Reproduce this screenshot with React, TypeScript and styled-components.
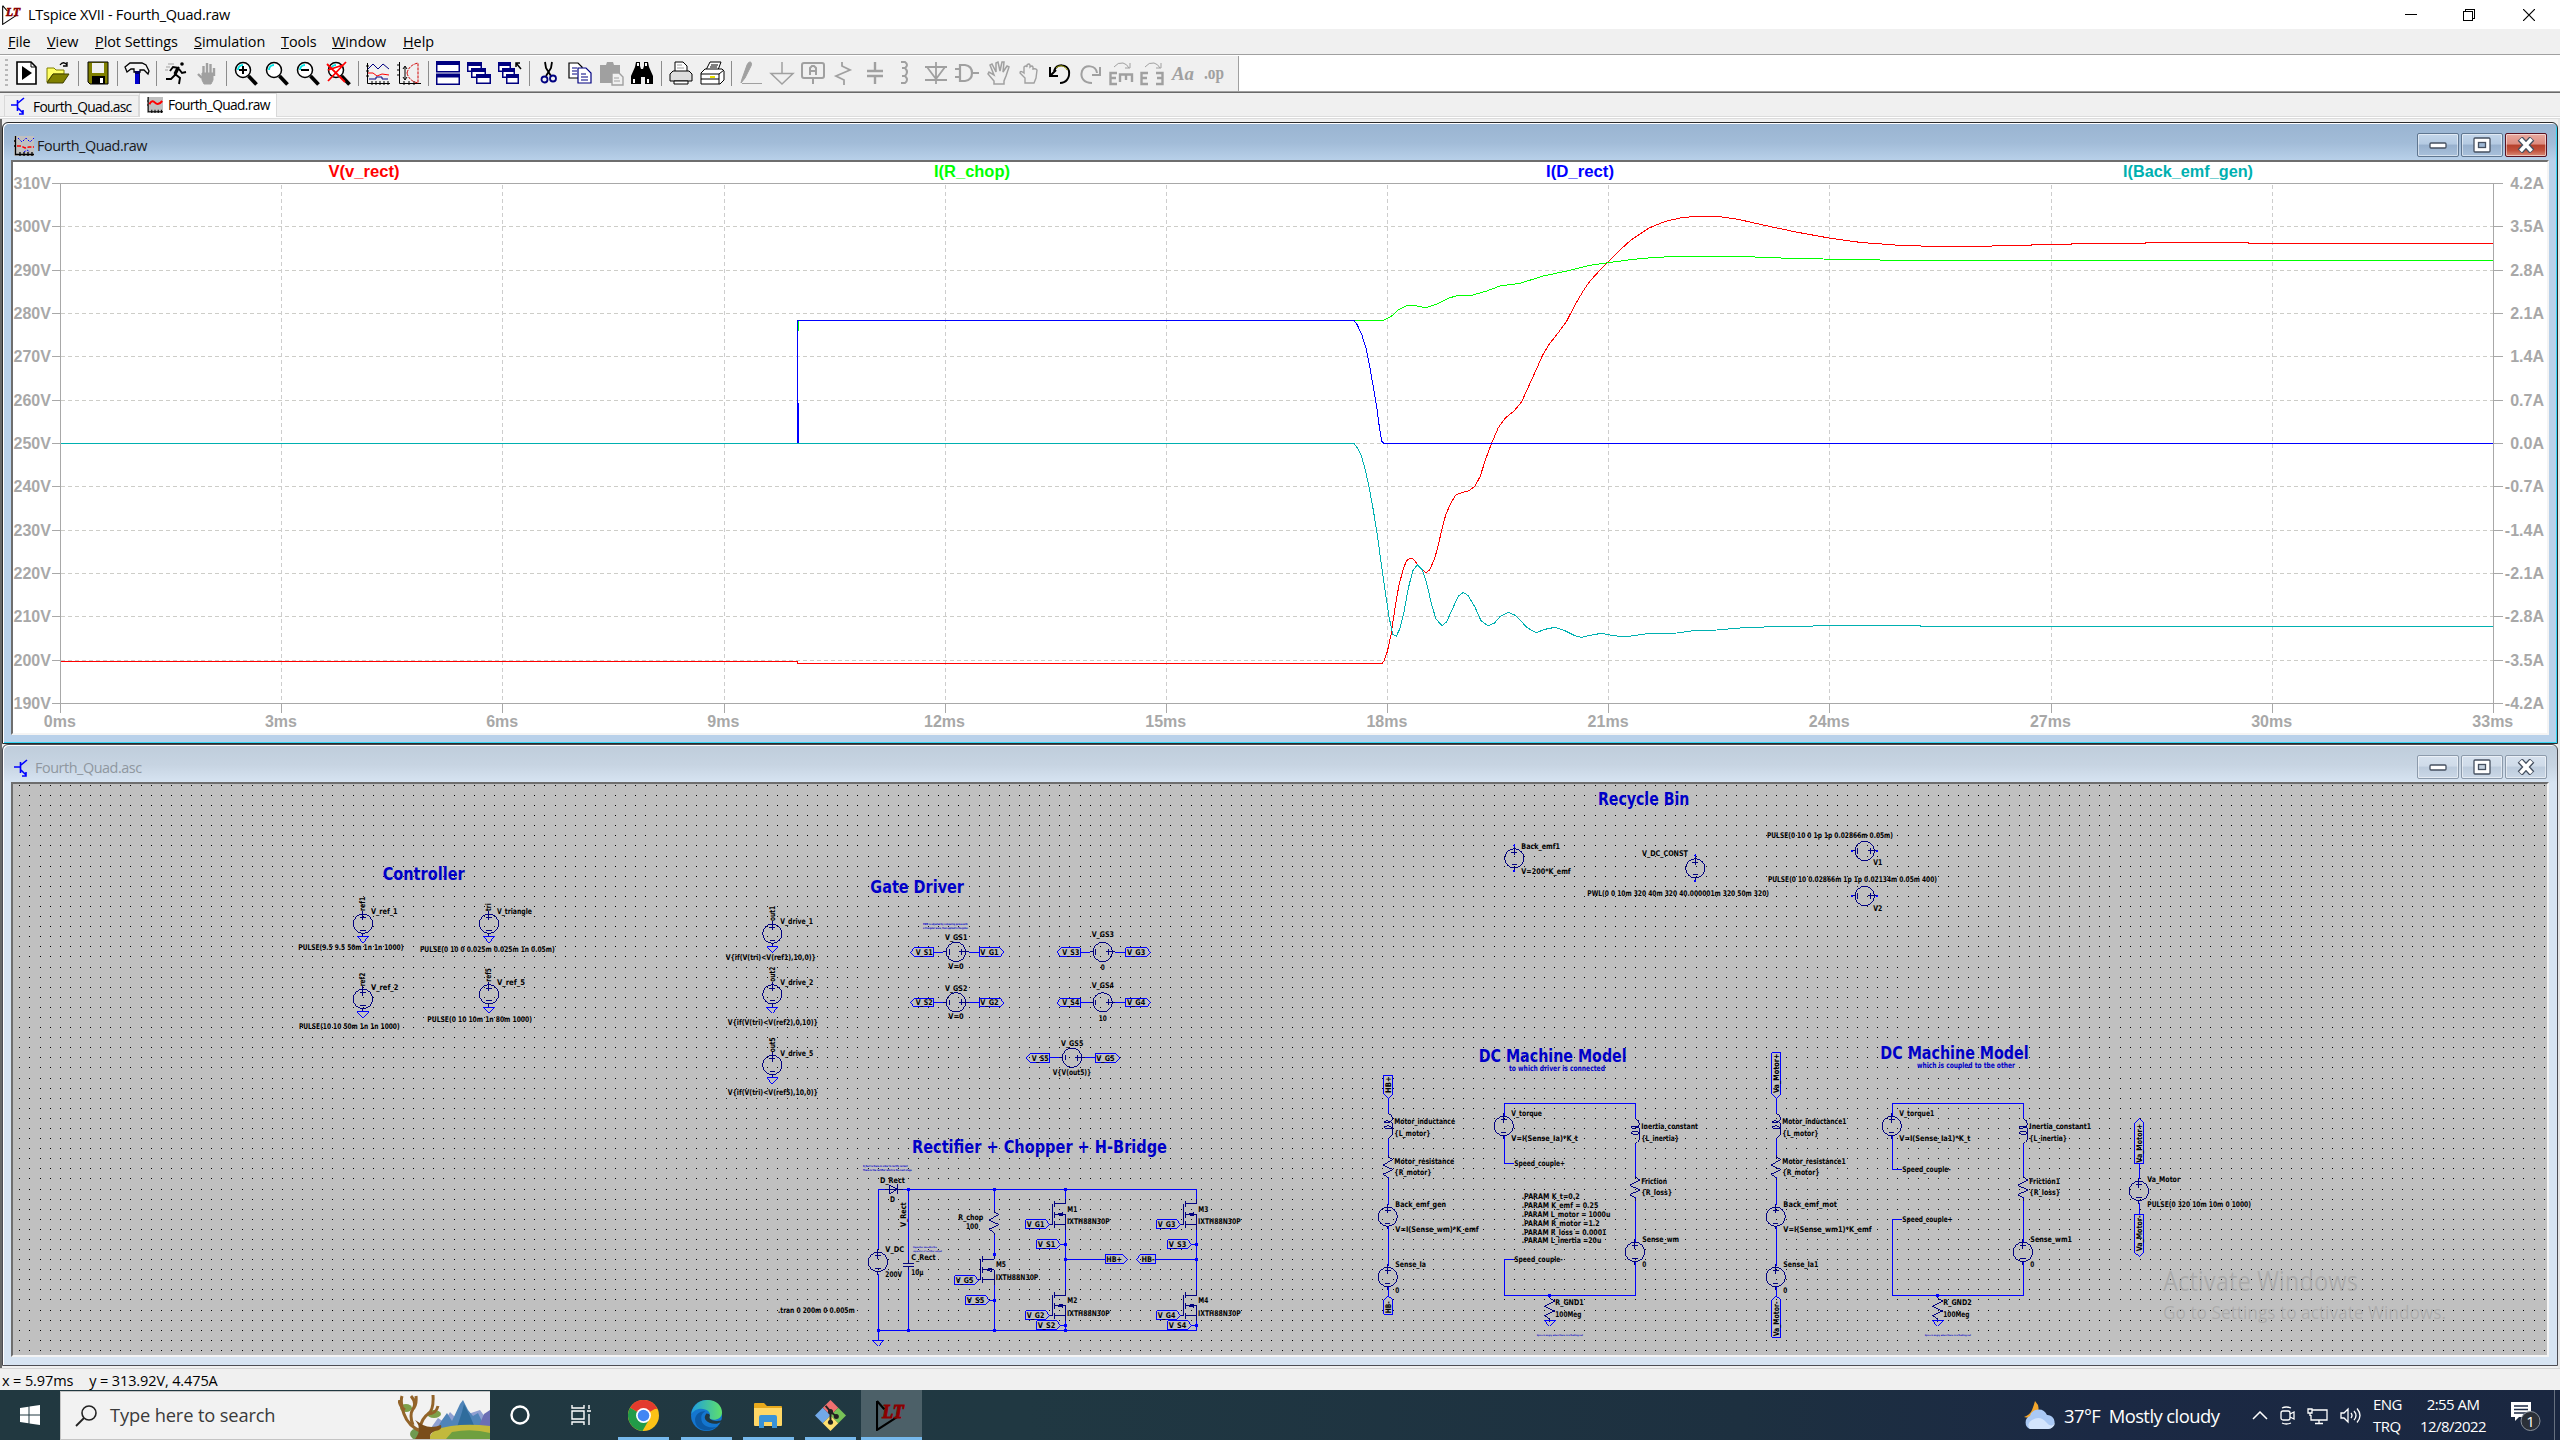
import React from 'react';
import styled, { createGlobalStyle } from 'styled-components';

const UI = '"Open Sans", "Noto Sans", sans-serif';
const SCH = '"DejaVu Sans Condensed", "DejaVu Sans", sans-serif';
const WIRE = '#0000ff';
const SYM = '#000080';

const Global = createGlobalStyle`
  html, body { margin: 0; padding: 0; background: #f0f0f0; }
  body { width: 2560px; height: 1440px; overflow: hidden; font-family: ${UI}; }
  * { box-sizing: border-box; }
  svg { display: block; }
`;

/* ---------- application frame ---------- */
const Screen = styled.div`
  width: 2560px; height: 1440px; display: flex; flex-direction: column;
  background: #f0f0f0; color: #000; overflow: hidden;
`;
const TitleBar = styled.header`
  height: 29px; flex: none; background: #fff; display: flex; align-items: center; padding: 0 1px 0 2px;
`;
const AppTitle = styled.span`
  font-size: 14.5px; letter-spacing: -0.22px; margin-left: 6px; line-height: 29px;
`;
const Spring = styled.div`flex: 1;`;
const CaptionButton = styled.div<{ w: number }>`
  width: ${p => p.w}px; display: flex; justify-content: center;
`;
const MenuBar = styled.nav`
  height: 26px; flex: none; display: flex; background: #f0f0f0; border-bottom: 1px solid #a0a0a0; padding-left: 8px;
`;
const MenuItem = styled.span<{ w: number }>`
  width: ${p => p.w}px; font-size: 14.4px; line-height: 26px; letter-spacing: -0.03px; white-space: nowrap;
`;
const ToolRow = styled.div`
  height: 38px; flex: none; display: flex; background: #fff; padding-top: 1px;
  border-bottom: 1px solid #696969; box-shadow: inset 0 -1px 0 #a0a0a0;
`;
const ToolStrip = styled.div`
  width: 1239px; height: 35px; background: #f0f0f0; border-right: 1px solid #a0a0a0; display: flex; align-items: center;
  padding-bottom: 1px;
`;
const Grip = styled.div`
  width: 3px; height: 28px; margin: 0 4px 0 5px;
  background: repeating-linear-gradient(#b8b8b8 0 2px, transparent 2px 5px);
`;
const ToolButton = styled.div`
  width: 30.84px; flex: none; display: flex; justify-content: center;
  svg { overflow: visible; }
`;
const Separator = styled.div`
  width: 8.5px; height: 25px; flex: none;
  &::after { content: ''; display: block; width: 1px; height: 25px; margin-left: 4px; background: #8c8c8c; }
`;
const TabStrip = styled.div`
  height: 26px; flex: none; display: flex; align-items: flex-start; padding: 0 0 0 4px;
  border-bottom: 1px solid #dcdcdc; background: linear-gradient(#f0f0f0 23px, #dcdcdc 23px 24px, #fff 24px);
`;
const Tab = styled.div<{ active?: boolean }>`
  display: flex; align-items: center; font-size: 13.8px; letter-spacing: -0.68px; white-space: nowrap;
  width: ${p => (p.active ? 138 : 135)}px; height: ${p => (p.active ? 24 : 21)}px;
  margin-top: ${p => (p.active ? 0 : 2)}px; padding: 0 0 ${p => (p.active ? 2 : 0)}px ${p => (p.active ? 7 : 6)}px;
  gap: ${p => (p.active ? 5 : 4)}px;
  background: ${p => (p.active ? '#fff' : '#f0f0f0')}; border: solid #d9d9d9; border-width: 1px 1px 0 1px;
`;

/* ---------- document windows ---------- */
const Desk = styled.main`
  height: 1249px; flex: none; padding: 3px 0 0 0; border: solid #696969; border-width: 0 2px 0 2px;
  border-right-color: #e6e6e6; display: flex; flex-direction: column;
`;
const DocWindow = styled.section<{ active?: boolean }>`
  width: 2556px; height: 622px; flex: none; display: flex; flex-direction: column;
  border: 1px solid ${p => (p.active ? '#2b2b2b' : '#4c4c52')}; border-radius: 6px 6px 0 0;
  padding: 0 8px 8px 8px;
  box-shadow: inset 1px 1px 0 #fff${p => (p.active ? ', inset -1px -1px 0 #33d6f5' : '')};
  background: ${p =>
    p.active
      ? 'linear-gradient(#99b4d1 0, #a2bcd8 20px, #b9d1ea 38px, #b9d1ea 100%)'
      : 'linear-gradient(#bfcddb 0, #c7d4e2 20px, #d7e4f2 38px, #d7e4f2 100%)'};
`;
const DocTitle = styled.div<{ active?: boolean }>`
  height: 37px; flex: none; display: flex; align-items: center; padding: 9px 0 0 3px; font-size: 14.4px;
  letter-spacing: -0.45px; color: ${p => (p.active ? '#1a1a1a' : '#8f979f')};
`;
const DocName = styled.span`margin-left: 3px; line-height: 20px;`;
const DocButtons = styled.div`display: flex; gap: 2px; margin: -2px 2px 0 0;`;
const DocButton = styled.div<{ kind: 'active' | 'idle' | 'close' }>`
  width: 42px; height: 24px; border-radius: 2px; display: flex; align-items: center; justify-content: center;
  border: 1px solid ${p => (p.kind === 'close' ? '#5a1020' : p.kind === 'active' ? '#5f7690' : '#8c9aab')};
  box-shadow: inset 0 0 0 1px rgba(255,255,255,0.5);
  background: ${p =>
    p.kind === 'close'
      ? 'linear-gradient(#e9a99f 0, #dc8c80 46%, #b5402c 50%, #c2513c 75%, #d98b78 100%)'
      : p.kind === 'active'
      ? 'linear-gradient(#c3d6ea 0, #b4cae2 46%, #97b0cd 50%, #a9c1db 100%)'
      : 'linear-gradient(#d6e1ee 0, #cfdbe9 46%, #bccbdc 50%, #cbd8e7 100%)'};
`;
const Client = styled.div<{ bg: string }>`
  width: 2538px; height: 575px; flex: none; background: ${p => p.bg}; overflow: hidden;
  border: 2px solid #6e6e6e; border-right-color: #f4f4f4; border-bottom-color: #f4f4f4;
`;
const StatusBar = styled.footer`
  height: 22px; flex: none; background: #f0f0f0; border-top: 1px solid #d5d5d5; font-size: 14.5px; letter-spacing: -0.12px;
  line-height: 23px; padding-left: 2px; display: flex; gap: 16px; white-space: nowrap;
`;

/* ---------- taskbar ---------- */
const TaskBar = styled.div`
  height: 50px; flex: none; display: flex; color: #fff;
  background: linear-gradient(90deg, #213840 0, #203842 40%, #1d3040 68%, #1b2944 82%, #1a2740 100%);
`;
const StartButton = styled.div`
  width: 60px; display: flex; align-items: center; justify-content: center;
`;
const SearchBox = styled.div`
  width: 430px; height: 49px; margin-top: 1px; background: #f2f2f2; border: solid #c4c4c4; border-width: 1px 0 1px 1px;
  display: flex; align-items: center; padding-left: 14px; color: #3a3a3a; font-size: 18.3px; letter-spacing: -0.15px;
`;
const SearchText = styled.span`margin-left: 13px; flex: 1; white-space: nowrap; line-height: 44px; height: 46px;`;
const TaskButton = styled.div<{ w: number; bar?: number; on?: boolean }>`
  width: ${p => p.w}px; height: 50px; display: flex; flex-direction: column; align-items: center; justify-content: flex-end;
  background: ${p => (p.on ? '#4c6068' : 'transparent')};
  &::after { content: ''; width: ${p => p.bar || 0}px; height: 3px; background: #76b9ed; }
`;
const TaskIcon = styled.div`height: 47px; display: flex; align-items: center; padding-top: 3px;`;
const Weather = styled.div`display: flex; align-items: center; width: 229px; font-size: 18.4px; letter-spacing: -0.55px; gap: 9px; white-space: pre;`;
const Tray = styled.div`display: flex; align-items: center; gap: 12px; width: 121px; padding-top: 1px;`;
const TwoLine = styled.div<{ w: number; center?: boolean }>`
  width: ${p => p.w}px; font-size: 15px; line-height: 22px; letter-spacing: -0.55px; padding-top: 3px;
  text-align: ${p => (p.center ? 'center' : 'left')}; white-space: nowrap;
`;
const Notice = styled.div`width: 59px; display: flex; align-items: center; padding: 2px 0 0 15px;`;
const PeekEdge = styled.div`width: 6px; border-left: 1px solid #66707f;`;

/* ---------- toolbar icons ---------- */
const G = '#a0a0a0';
const K = '#000';
const N = '#000080';

const lens = (mark: React.ReactNode) => (
  <g fill="none" stroke={K}>
    <circle cx="9" cy="9" r="7.500" fill="#fff" strokeWidth="1.500" />
    <path d="M4 9a5 5 0 0 1 5-5" stroke="#00e5e5" strokeWidth="2" />
    <path d="M14.500 15l8 8.500" strokeWidth="3.800" />
    {mark}
  </g>
);
const winBox = (x: number, y: number, w: number, h: number) => (
  <g key={x + '-' + y}>
    <rect x={x} y={y} width={w} height={h} fill={N} />
    <rect x={x + 1.5} y={y + 4} width={w - 3} height={h - 5.5} fill="#fff" />
  </g>
);
const palm = 'M8 23v-3l-6-7 1-2 5 3L4 4l2-1 4 8L10 2l2-1 2 9 2-9h2l-1 10 4-6 2 1-3 9-2 5v3z';

const ICONS: Record<string, React.ReactNode> = {
  play: <g><path d="M2 1h14l5 5v17H2z" fill="#fff" stroke={K} strokeWidth="1.600" /><path d="M16 1v5h5" fill="none" stroke={K} /><path d="M7 5v14l10-7z" /></g>,
  open: <g><path d="M1 21V7h7l2 2h8v4H7z" fill="#ffff66" stroke="#808000" /><path d="M1 22l6-9h16l-6 9z" fill="#808000" stroke="#404000" /><path d="M14 4c2-3 5-3 7 0m0-3v4h-4" fill="none" stroke={K} strokeWidth="1.300" /></g>,
  save: <g><path d="M2 1h20v22H4l-2-2z" fill="#808000" stroke={K} /><rect x="6" y="2" width="12" height="10" fill="#f0f0f0" /><rect x="6" y="15" width="13" height="8" /><rect x="14" y="17" width="3" height="5" fill="#fff" /></g>,
  hammer: <g><path d="M0 6l5-4h12l4 2 3 6-1 3-4-4h-4v2H9V8H6l-4 3z" fill="#f4f4f4" stroke={K} strokeWidth="1.300" /><path d="M10 11h5v12h-5z" fill="#0000d0" /><path d="M10 10h5v3h-5zM14 11h1v12h-1z" fill="#000060" /></g>,
  run: <g fill="none" stroke={K} strokeWidth="1.900"><circle cx="18" cy="3" r="1.800" fill={K} stroke="none" /><path d="M15 6l-4 7 5 4-1 6M12 13l-5 5H2M15 7l-6-1-3 4M15 8l3 4 4-1" /><path d="M14 7l-3 6" strokeWidth="3.400" /><path d="M4 3h6M2 6h4M1 9h3" stroke={G} strokeWidth="1" /></g>,
  hand: <g fill="none" stroke={G}><path d="M7 12h11v7l-2 4H9l-2-4z" fill={G} /><path d="M8.500 13V5M12 13V2M15.500 13V3M19 15V7M7 17l-4-4" strokeWidth="2.400" /></g>,
  zin: lens(<path d="M5 9h8M9 5v8" strokeWidth="2" />),
  z: lens(null),
  zout: lens(<path d="M5 9h8" strokeWidth="2" />),
  zx: lens(<g stroke="#f00" strokeWidth="1.800"><path d="M0 3l18 18M19 1L1 20M1 9l15-5" /></g>),
  plot: <g fill="none" stroke={K}><path d="M1.500 2V22.500H24M6 20v4M10 20v4M14 20v4M18 20v4M22 20v4M0 5h3M0 10h3M0 15h3" /><path d="M2 8l5-5 5 5 5-5 6 5" stroke={N} /><path d="M2 12h5l4 3 5-2 7 1" stroke="#f00" /><path d="M3 18h7v-2h6v2h6" stroke={N} /></g>,
  auto: <g fill="none" stroke={K}><path d="M2.500 1V22.500H24M7 20v4M12 20v4M17 20v4M0 4h3M0 9h3M0 14h3" /><path d="M8 6v12M6 8l2-3 2 3M6 16l2 3 2-3" /><path d="M10 12q2-8 11-10v20q-9-2-11-10z" stroke="#d00000" strokeDasharray="3 1" /></g>,
  tile: <g>{winBox(0, 0, 24, 11.5)}{winBox(0, 12.5, 24, 11.5)}</g>,
  casc: <g>{winBox(0, 1, 15, 10)}{winBox(4, 7, 15, 10)}{winBox(9, 13, 15, 10)}</g>,
  casc2: <g>{winBox(0, 1, 13, 10)}{winBox(4, 7, 13, 10)}{winBox(8, 13, 13, 10)}<path d="M23 8l-5-6m0 4V2h4" fill="none" stroke={K} strokeWidth="1.500" /></g>,
  cut: <g fill="none" strokeWidth="1.800"><path d="M8 1l1 6 5 8M15 1l-1 6-5 8" stroke={K} /><circle cx="7.500" cy="18.500" r="3" stroke={N} /><circle cx="16" cy="17.500" r="3" stroke={N} /></g>,
  copy: <g fill="#fff" stroke={K} strokeWidth="1.200"><path d="M1 2h9l4 4v11H1z" /><path d="M10 7h8l5 5v10H10z" stroke={N} /><path d="M4 7h5M4 10h5M4 13h5M13 13h5M13 16h7M13 19h7" stroke={N} /></g>,
  paste: <g><path d="M1 4h6l1-3h6l1 3h6v8h-8v10H1z" fill={G} /><path d="M13 12h7l4 4v8H13z" fill="#f0f0f0" stroke={G} strokeWidth="1.400" /><path d="M15 17h5M15 20h6" stroke={G} /></g>,
  find: <g><path d="M6 1h4v4l1 3h2l1-3V1h4l1 5 4 9v8h-8v-7h-4v7H1v-8l4-9z" /><path d="M7 2h2v3H7zM15 2h2v3h-2zM3 18h2v4H3zM17 18h2v4h-2z" fill="#fff" /></g>,
  print: <g stroke={K} fill="#fff"><path d="M6 11V1h8l4 4v6z" /><path d="M1 13l3-3h16l3 3v7H1z" fill="#ddd" /><path d="M5 20h14v3H5z" /><path d="M8 4h5M8 7h7" stroke={G} /></g>,
  psetup: <g stroke={K} fill="#fff"><path d="M6 9l4-8h11l-3 8z" /><path d="M1 12l4-4h17l2 2v9l-4 4H1z" /><path d="M1 13h18l5-4M19 13v10M1 18h18M11 4h7M10 6h7" fill="none" /><path d="M10 16h5" stroke="#e8e000" strokeWidth="2" /></g>,
  pencil: <g fill={G} stroke={G}><path d="M3 18L8 4c2-5 6-3 4 1L6 17l-4 5z" /><path d="M3 22.500h20" /></g>,
  gnd: <path d="M12 1v12M1 12.500h22L12 23z" fill="none" stroke={G} strokeWidth="1.500" />,
  label: <g fill="none" stroke={G} strokeWidth="2"><rect x="1" y="2" width="22" height="15" rx="2" /><path d="M12 17v6M9 14V7l2-2h2l2 2v7M9 10h6" /></g>,
  res: <path d="M10 1v4l8 4-14 6 8 4v5" fill="none" stroke={G} strokeWidth="1.800" />,
  cap: <path d="M12 1v9M12 15v8M4 10h16M4 15h16" fill="none" stroke={G} strokeWidth="2.400" />,
  ind: <path d="M8 1h4q4 3 0 6h-3 3q4 4 0 8h-3 3q4 4 0 7H8" fill="none" stroke={G} strokeWidth="2" />,
  diode: <path d="M12 1v22M1 6h22M3 6l9 12 9-12M1 19h22" fill="none" stroke={G} strokeWidth="1.800" />,
  comp: <path d="M0 8h5M0 16h5M5 4v16h5q7-1 7-8t-7-8zM17 12h7" fill="none" stroke={G} strokeWidth="2.200" />,
  move: <path d={palm} fill="none" stroke={G} strokeWidth="1.500" />,
  drag: <path d="M8 22v-5l-5-5q0-3 4 0V6q2-2 3 0V4q2-2 3 0v2q2-2 3 0v2q3-1 4 1l-1 8-2 5z" fill="none" stroke={G} strokeWidth="1.400" />,
  undo: <g fill="none" strokeWidth="2"><path d="M6 10c3-8 13-7 15 0 1 7-3 12-9 12" stroke={K} /><path d="M8 7c4-4 9-2 11 2" stroke="#a0a000" strokeWidth="1" /><path d="M2 6v9h8M2 15l6-6" stroke={K} /></g>,
  redo: <g fill="none" stroke={G} strokeWidth="2"><path d="M19 12c-1-8-12-9-15-2-2 7 2 12 10 12" /><path d="M22 6v8h-8" /></g>,
  em: <g fill="none" stroke={G}><path d="M8 12H1.500V23H8M1.500 17H7M11 21v-7.500h12v7.500M17 14v5" strokeWidth="2.400" /><path d="M5 6q4-5 9-4 4 1 6 5M21 2v5h-5" /></g>,
  e3: <g fill="none" stroke={G}><path d="M8 12H1.500V23H8M1.500 17H7M16 12h6.500V23H16M22.500 17H17" strokeWidth="2.400" /><path d="M5 6q4-5 9-4 4 1 6 5M21 2v5h-5" /></g>,
  aa: <text x="1" y="19" fontFamily='"Liberation Serif", serif' fontStyle="italic" fontWeight="700" fontSize="19.500" fill={G} textLength="22" lengthAdjust="spacingAndGlyphs">Aa</text>,
  op: <text x="2" y="18" fontFamily='"Liberation Serif", serif' fontWeight="700" fontSize="18.500" fill={G} textLength="20" lengthAdjust="spacingAndGlyphs">.op</text>,
};

const TOOLS = [
  'play', 'open', '|', 'save', '|', 'hammer', '|', 'run', 'hand', '|', 'zin', 'z', 'zout', 'zx', '|', 'plot', 'auto', '|',
  'tile', 'casc', 'casc2', '|', 'cut', 'copy', 'paste', 'find', '|', 'print', 'psetup', '|', 'pencil', 'gnd', 'label', 'res',
  'cap', 'ind', 'diode', 'comp', 'move', 'drag', 'undo', 'redo', 'em', 'e3', 'aa', 'op',
];

const LtLogo = ({ size, dark }: { size: number; dark?: boolean }) => (
  <svg width={size} height={size} viewBox="0 0 30 30">
    <path d="M1 1v28L21 16M1 1l7 8" fill="none" stroke={K} strokeWidth={dark ? 2 : 1.600} />
    <text x="6" y="17" fontFamily='"Liberation Serif", serif' fontStyle="italic" fontWeight="700" fontSize="18" fill="#8b0000" stroke="#8b0000" textLength="21" lengthAdjust="spacingAndGlyphs">LT</text>
  </svg>
);
const AscIcon = () => (
  <svg width="18" height="18" viewBox="0 0 18 18"><path d="M0 8h6M6.500 3v11M7 6l6-5M7 11l5 5M12 13v4h-4" fill="none" stroke="#0000ff" strokeWidth="1.600" /></svg>
);
const RawIcon = ({ doc }: { doc?: boolean }) => (
  <svg width={doc ? 20 : 16} height={doc ? 20 : 16} viewBox="0 0 20 20">
    <rect width="20" height="20" fill="#c0c0c0" />
    <path d="M1.500 0V18.500H20M6 16v4M10 16v4M14 16v4M18 16v4M0 5h2M0 10h2" fill="none" stroke={K} strokeWidth="1.300" />
    {doc ? (
      <g fill="none"><path d="M4 2l4 4 4-4 4 4 4-4M10 16l3-2 3 2" stroke="#00f" strokeDasharray="2 1.500" /><path d="M3 10h4l4 2 4-1h5" stroke="#f00" strokeDasharray="4 1.500" strokeWidth="1.500" /></g>
    ) : (
      <path d="M3 9q3-6 7-2t9-2" fill="none" stroke="#f00" strokeWidth="2.500" />
    )}
  </svg>
);

const DocControls = ({ active }: { active?: boolean }) => {
  const ink = '#465060';
  return (
    <DocButtons>
      <DocButton kind={active ? 'active' : 'idle'}>
        <svg width="18" height="8"><rect x="1" y="2" width="16" height="5" rx="1" fill="#fff" stroke={ink} strokeWidth="1.300" /></svg>
      </DocButton>
      <DocButton kind={active ? 'active' : 'idle'}>
        <svg width="18" height="16"><rect x="1" y="1" width="16" height="14" rx="1" fill="#fff" stroke={ink} strokeWidth="1.300" /><rect x="5.500" y="5.500" width="7" height="5" fill={active ? '#9fb8d4' : '#c5d2e0'} stroke={ink} strokeWidth="1.300" /></svg>
      </DocButton>
      <DocButton kind={active ? 'close' : 'idle'}>
        <svg width="20" height="16" viewBox="0 0 20 16"><path d="M4 1.500l12 13M16 1.500l-12 13" stroke={ink} strokeWidth="6.400" /><path d="M4.500 2l11 12M15.500 2l-11 12" stroke="#fff" strokeWidth="3.800" /></svg>
      </DocButton>
    </DocButtons>
  );
};

/* ---------- waveform plot ---------- */
const PX = 60.5, PY = 183.5, PW = 2433, PH = 520;
const LEFT = [310, 300, 290, 280, 270, 260, 250, 240, 230, 220, 210, 200, 190];
const RIGHT = ['4.2', '3.5', '2.8', '2.1', '1.4', '0.7', '0.0', '-0.7', '-1.4', '-2.1', '-2.8', '-3.5', '-4.2'];

// Transient samples are recorded at three steps per unit, relative to (1280, 240).
const fine = (s: string) =>
  s.trim().split(/\s+/).map(p => {
    const [x, y] = p.split(',').map(Number);
    return `${(1280 + x / 3).toFixed(1)},${(240 + y / 3).toFixed(1)}`;
  }).join(' ');

const RED = `60.5,661.5 797,661.5 797,663.5 1382,663.5 ${fine('312,1262 322,1235 327,1212 334,1180 341,1130 349,1080 357,1035 365,1005 372,980 380,962 390,955 400,957 412,973 427,990 438,998 449,990 464,955 475,915 485,870 497,825 512,790 527,765 545,758 567,752 585,738 600,710 618,655 636,607 655,563 675,535 702,513 725,485 750,430 775,375 788,345 808,312 835,278 860,243 885,195 910,152 930,123 965,85 985,66 1020,30 1053,0')} 1649,228 1665,221.5 1682,217.5 1703,216 1722,217 1739,219.5 1763,225 1796,232 1829,238 1861,242.500 1902,245.500 1940,246.500 1980,246.500 2005,245.500 2031,245.500 2032,244.500 2071,244.500 2072,243.500 2145,243.500 2146,242.500 2248,242.500 2249,243.500 2493,243.500`;
const GREEN = `60.5,443.5 797.5,443.5 797.5,330.5 798.5,330.5 798.5,320.5 ${fine('310,241 335,228 355,210 380,197 405,197 437,203 470,193 510,173 532,167 575,166 620,153 660,138 720,130 790,108 860,93 930,76 985,68 1060,58 1115,53 1170,50 1400,50 1480,53 1560,56')} 1860,259.500 1900,260.500 2493,260.500`;
const BLUE = `60.5,443.5 797.5,443.5 797.5,320.5 ${fine('222,241 232,255 245,283 258,325 270,385 280,440 290,500 298,560 305,603 312,610.500')} 2493,443.5`;
const TEAL = `60.5,443.5 ${fine('222,610.5 235,628 245,650 257,695 268,745 280,810 292,885 305,980 318,1070 327,1130 338,1183 349,1189 360,1165 372,1115 385,1045 398,993 412,975 427,990 440,1030 455,1095 468,1137 486,1157 500,1145 518,1105 535,1069 550,1057 565,1067 585,1102 603,1142 623,1157 643,1150 660,1130 685,1117 708,1127 740,1162 768,1178 795,1168 825,1162 855,1172 885,1187 904,1192 935,1185 965,1180 1000,1187 1035,1190 1060,1187 1100,1181 1190,1179 1240,1172 1310,1170 1390,1163 1480,1160 1560,1159')} 1835,625.500 1920,625.500 1921,626.500 2493,626.500`;

const PLOT_LEGEND: [string, string, number, number][] = [
  ['V(v_rect)', '#ff0000', 364, 71], ['I(R_chop)', '#00ff00', 972, 76], ['I(D_rect)', '#0000ff', 1580, 68], ['I(Back_emf_gen)', '#00b0b0', 2188, 130],
];

const Plot = () => (
  <svg width="2534" height="571" viewBox="13 162 2534 571" fontFamily='"Liberation Sans", Arial, sans-serif' fontWeight="700" fontSize="16">
    <g shapeRendering="crispEdges" fill="none" stroke="#a8a8a8">
      {LEFT.map((_, i) => {
        const y = Math.floor(PY + (PH * i) / 12) + 0.5;
        return (
          <g key={i}>
            {i > 0 && i < 12 && <path d={`M${PX} ${y}H${PX + PW}`} stroke="#cdcdc8" strokeDasharray="4 3" />}
            <path d={`M${PX - 9} ${y}h9M${PX + PW} ${y}h9`} />
          </g>
        );
      })}
      {LEFT.slice(0, 12).map((_, i) => {
        const x = Math.floor(PX + (PW * i) / 11) + 0.5;
        return (
          <g key={i}>
            {i > 0 && i < 11 && <path d={`M${x} ${PY + 1}V${PY + PH}`} stroke="#cdcdcd" strokeDasharray="4 3" />}
            <path d={`M${x} ${PY + PH}v9`} />
          </g>
        );
      })}
      <rect x={PX} y={PY} width={PW} height={PH} />
    </g>
    <g fill="none" shapeRendering="crispEdges">
      <polyline points={RED} stroke="#ff0000" />
      <polyline points={GREEN} stroke="#00ff00" />
      <polyline points={BLUE} stroke="#0000ff" />
      <path d="M797.500 403V443" stroke="#0000ff" strokeWidth="2" />
      <polyline points={TEAL} stroke="#00b0b0" />
    </g>
    {PLOT_LEGEND.map(([t, c, x, w]) => (
      <text key={t} x={x - w / 2} y="177" fill={c} textLength={w} lengthAdjust="spacingAndGlyphs">{t}</text>
    ))}
    <g fill="#a8a8a8">
      {LEFT.map((v, i) => <text key={v} x="13.500" y={PY + (PH * i) / 12 + 5.500}>{v}V</text>)}
      {RIGHT.map((v, i) => <text key={v} x="2544" textAnchor="end" y={PY + (PH * i) / 12 + 5.500}>{v}A</text>)}
      {LEFT.slice(0, 12).map((_, i) => <text key={i} textAnchor="middle" x={PX + (PW * i) / 11 - 0.7} y="727">{i * 3}ms</text>)}
    </g>
  </svg>
);

/* ---------- schematic primitives: sheet regions are drawn at three units per pixel ---------- */
type Pt = { x: number; y: number };
const Region = ({ x, y, children }: Pt & { children: React.ReactNode }) => (
  <g transform={`translate(${x} ${y}) scale(0.33333)`} strokeWidth="3" fill="none">{children}</g>
);
const T = ({ a, b, y, s = 23.5, c = '#000', children }: { a: number; b: number; y: number; s?: number; c?: string; children: string }) => (
  <text x={a} y={y + s * 0.36} fontSize={s} fontWeight="700" fill={c} textLength={b - a} lengthAdjust="spacingAndGlyphs">{children}</text>
);
const V = ({ x, a, b, children }: { x: number; a: number; b: number; children: string }) => (
  <text transform={`translate(${x + 8} ${a}) rotate(-90)`} fontSize="23.500" fontWeight="700" fill="#000" textLength={a - b} lengthAdjust="spacingAndGlyphs">{children}</text>
);
const Head = (p: { a: number; b: number; y: number; children: string }) => <T {...p} s={51} c="#0000c8" />;
const Wire = ({ d }: { d: string }) => <path d={d} stroke={WIRE} />;
const Source = ({ x, y, flat, open }: Pt & { flat?: boolean; open?: boolean }) => (
  <g transform={`translate(${x} ${y}) rotate(${flat ? 90 : 0})`} stroke={SYM}>
    <circle r="29" />
    <path d="M-9 -18H9M0 -27V-10M-8 20H8M0 29V38M0 -38V-29" />
    {open && <path d="M-2 -40h4v4h-4zM-2 36h4v4h-4z" stroke={WIRE} />}
  </g>
);
const Ground = ({ x, y }: Pt) => <path d={`M${x - 17} ${y}h34l-17 18z`} stroke={WIRE} />;
const Resistor = ({ x, y }: Pt) => <path d={`M${x} ${y}v5l14 8-31 16 31 14-31 14 17 10v8`} stroke={SYM} />;
const Inductor = ({ x, y }: Pt) => (
  <path d={`M${x} ${y}q14 6 12 17q-3 12-20 12q-10-3 0-6q18-2 22 12q2 14-18 12q-14-4-6-8q20-6 24 12q0 18-14 24`} stroke={SYM} />
);
const Dot = ({ x, y }: Pt) => <rect x={x - 4} y={y - 4} width="8" height="8" fill={WIRE} stroke="none" />;
const Flag = ({ x, y, len = 70, dir, w, children }: Pt & { len?: number; dir: 0 | 90 | 180 | 270; w?: number; children: string }) => {
  const tw = w ?? len - 19;
  const vertical = dir === 90 || dir === 270;
  const toward = dir === 0 || dir === 90 ? -1 : 1;
  const mid = toward * (13 + (len - 13) / 2);
  return (
    <g>
      <path transform={`translate(${x} ${y}) rotate(${dir})`} d={`M0 0l-12-13H-${len}V13H-12z`} stroke={WIRE} />
      {vertical
        ? <V x={x} a={y + mid + tw / 2} b={y + mid - tw / 2}>{children}</V>
        : <T a={x + mid - tw / 2} b={x + mid + tw / 2} y={y}>{children}</T>}
    </g>
  );
};
const Mosfet = ({ x, y, name }: Pt & { name: string }) => (
  <g>
    <path d={`M${x} ${y - 15}v15h-34M${x - 34} ${y - 9}v18M${x - 40} ${y}v62h-8M${x - 34} ${y + 23}v18M${x - 34} ${y + 52}v19M${x - 34} ${y + 31}h34v46M${x - 34} ${y + 61}h34M${x - 26} ${y + 31}l18-5v10z`} stroke={SYM} />
    <T a={x + 5} b={x + 35} y={y + 16}>{name}</T>
    <T a={x + 4} b={x + 132} y={y + 53}>IXTH88N30P</T>
  </g>
);

const DotGrid = () => {
  let d = '';
  for (let j = 0; j < 57; j++) {
    const y = Math.floor(785.4 + j * 10.09);
    if (y > 1354) break;
    for (let i = 0; i < 252; i++) {
      const x = Math.floor(19.9 + i * 10.097);
      if (x < 2547) d += `M${x} ${y}h1v1h-1z`;
    }
  }
  return <path d={d} fill="#000" shapeRendering="crispEdges" />;
};

type MachineProps = Pt & {
  n: string; back: string; head: [number, number, number]; sub: [number, number, number]; subText: string;
  upper: [number, string]; lower: [number, string]; rail: [string, string]; railLen: [number, number]; gnd: string;
};
const Machine = ({ x, y, n, back, head, sub, subText, upper, lower, rail, railLen, gnd }: MachineProps) => {
  const k = n.length * 10;
  return (
    <Region x={x} y={y}>
      <Head a={head[0]} b={head[1]} y={head[2]}>DC Machine Model</Head>
      <T a={sub[0]} b={sub[1]} y={sub[2]} c="#0000c8">{subText}</T>
      <Wire d="M85 205V250M85 325V376M85 440V525M85 590V708M85 770V798" />
      <Flag x={85} y={205} dir={90} len={railLen[0]}>{rail[0]}</Flag>
      <Inductor x={85} y={250} />
      <Resistor x={85} y={376} />
      <Source x={83} y={560} />
      <Source x={83} y={741} />
      <Flag x={85} y={798} dir={270} len={railLen[1]}>{rail[1]}</Flag>
      <T a={103} b={285 + k} y={275}>{`Motor_inductance${n}`}</T>
      <T a={103} b={212} y={311}>{'{L_motor}'}</T>
      <T a={103} b={283 + k} y={395}>{`Motor_resistance${n}`}</T>
      <T a={103} b={215} y={428}>{'{R_motor}'}</T>
      <T a={106} b={n ? 267 : 258} y={524}>{back}</T>
      <T a={106} b={356 + k * 1.5} y={599}>{`V=I(Sense_wm${n})*K_emf`}</T>
      <T a={106} b={198 + k * 1.3} y={704}>{`Sense_Ia${n}`}</T>
      <T a={106} b={118} y={782}>0</T>
      <Wire d={`M433 260V220H826V266M433 318V${upper[0]}H462M826 340V441M826 500V635M826 695V797H433V${lower[0]}H462`} />
      <Source x={431} y={288} />
      <T a={454} b={546 + k * 1.3} y={251}>{`V_torque${n}`}</T>
      <T a={454} b={654 + k * 1.3} y={326}>{`V=I(Sense_Ia${n})*K_t`}</T>
      <T a={463} b={upper[1] === '+' ? 615 : 608} y={upper[0]}>{`Speed_couple${upper[1]}`}</T>
      <T a={463} b={lower[1] === '+' ? 614 : 608} y={lower[0] + 1}>{`Speed_couple${lower[1]}`}</T>
      <Inductor x={826} y={266} />
      <T a={844} b={1014 + k * 1.5} y={290}>{`Inertia_constant${n}`}</T>
      <T a={844} b={957} y={326}>{'{L_inertia}'}</T>
      <Resistor x={826} y={437} />
      <T a={844} b={921 + k * 1.5} y={455}>{`Friction${n}`}</T>
      <T a={844} b={937} y={488}>{'{R_loss}'}</T>
      <Source x={825} y={666} />
      <T a={847} b={957 + k * 1.5} y={629}>{`Sense_wm${n}`}</T>
      <T a={847} b={859} y={704}>0</T>
      <Dot x={569} y={797} />
      <Resistor x={570} y={800} />
      <Ground x={569} y={871} />
      <T a={586} b={671} y={818}>{gnd}</T>
      <T a={586} b={664} y={854}>100Meg</T>
      <T a={530} b={669} y={916} s={7} c="#0000c8">Spice is angry when there is a floating net</T>
    </Region>
  );
};

const PARAMS: [string, number, number][] = [
  ['.PARAM K_t=0.2', 659, 500], ['.PARAM K_emf = 0.25', 715, 527], ['.PARAM L_motor = 1000u', 751, 554],
  ['.PARAM R_motor =1.2', 719, 581], ['.PARAM R_loss = 0.0001', 739, 608], ['.PARAM L_inertia =20u', 724, 632],
];
// x, y, node label, label top, name, name end
const CONTROL: [number, number, string, number, string, number][] = [
  [249, 221, 'ref1', 140, 'V_ref_1', 353], [627, 221, 'tri', 160, 'V_triangle', 756], [249, 447, 'ref2', 368, 'V_ref_2', 355],
  [627, 433, 'ref5', 354, 'V_ref_5', 735], [1477, 251, 'out1', 168, 'V_drive_1', 1599], [1477, 433, 'out2', 350, 'V_drive_2', 1600],
  [1477, 645, 'out5', 562, 'V_drive_5', 1600],
];
const CONTROL_VALUES: [number, number, number, string][] = [
  [55, 370, 293, 'PULSE(9.5 9.5 50m 1n 1n 1000)'], [420, 824, 298, 'PULSE(0 10 0 0.025m 0.025m 1n 0.05m)'],
  [57, 359, 530, 'PULSE(10 10 50m 1n 1n 1000)'], [442, 756, 509, 'PULSE(0 10 10m 1n 80m 1000)'],
  [1337, 1608, 323, 'V{if(V(tri)<V(ref1),10,0)}'], [1343, 1614, 518, 'V{if(V(tri)<V(ref2),0,10)}'], [1343, 1614, 728, 'V{if(V(tri)<V(ref5),10,0)}'],
];
// x, y, index, name y, value, value half width, value y
const GATES: [number, number, number, number, string, number, number][] = [
  [348, 276, 1, 232, 'V=0', 23, 320], [348, 427, 2, 385, 'V=0', 23, 470], [788, 276, 3, 224, '0', 6, 322], [788, 427, 4, 377, '10', 12, 476],
  [696, 593, 5, 551, 'V{V(out5)}', 58, 638],
];

const Schematic = () => (
  <svg width="2534" height="571" viewBox="13 784 2534 571" fontFamily={SCH} shapeRendering="crispEdges">
    <DotGrid />
    <Region x={280} y={850}>
      <Head a={308} b={554} y={72}>Controller</Head>
      {CONTROL.map(([x, y, node, top, name, end]) => (
        <g key={name}>
          <Source x={x} y={y} />
          <Ground x={x} y={y + 39} />
          <V x={x - 1} a={y - 38} b={top}>{node}</V>
          <T a={x + 24} b={end} y={y - 36}>{name}</T>
        </g>
      ))}
      {CONTROL_VALUES.map(([a, b, y, t]) => <T key={t} a={a} b={b} y={y}>{t}</T>)}
    </Region>
    <Region x={840} y={860}>
      <Head a={91} b={372} y={82}>Gate Driver</Head>
      <T a={249} b={383} y={193} s={8} c="#0000c8">PWM is adjusted by comparing pulses with</T>
      <T a={249} b={383} y={205} s={8} c="#0000c8">a triangular wave, then applied to the gates</T>
      {GATES.map(([x, y, i, ny, val, hw, vy]) => (
        <g key={i}>
          <Wire d={`M${x - 67} ${y + 1}H${x - 38}M${x + 38} ${y + 1}H${x + 70}`} />
          <Source x={x} y={y} flat />
          <Flag x={x - 137} y={y + 1} dir={180}>{`V_S${i}`}</Flag>
          <Flag x={x + 144} y={y + 1} dir={0} len={74}>{`V_G${i}`}</Flag>
          <T a={x - 33} b={x + 34} y={ny}>{`V_GS${i}`}</T>
          <T a={x - hw} b={x + hw} y={vy}>{val}</T>
        </g>
      ))}
    </Region>
    <Region x={840} y={1120}>
      <Head a={216} b={981} y={82}>Rectifier + Chopper + H-Bridge</Head>
      <T a={69} b={203} y={139} s={8} c="#0000c8">D_Rect is there in order to rectify current</T>
      <T a={69} b={215} y={151} s={8} c="#0000c8">There is the rectifier which is the next stage</T>
      <T a={219} b={290} y={382} s={7} c="#0000c8">Capacitor smooths the</T>
      <T a={219} b={306} y={394} s={7} c="#0000c8">capacitor of rectifier output</T>
      <Wire d="M115 388V208H135M188 208H1070V238M205 208V420M205 450V631M115 463V661M115 631H1070V583M463 208V275M463 340V403M463 490V631M677 208V238M677 322V511M677 590V631M677 418H796M947 418H1070M1070 322V511M463 541H449M662 373H677M662 616H677M1056 373H1070M1056 616H1070" />
      <path d="M135 208H188M148 195V222L172 208ZM173 193V223M189 430H221M189 439H221M205 420V430M205 439V450" stroke={SYM} />
      <Source x={114} y={426} />
      <Ground x={115} y={661} />
      <Resistor x={463} y={271} />
      <Mosfet x={677} y={252} name="M1" />
      <Mosfet x={1070} y={252} name="M3" />
      <Mosfet x={677} y={526} name="M2" />
      <Mosfet x={1070} y={526} name="M4" />
      <Mosfet x={463} y={418} name="M5" />
      <Flag x={629} y={313} dir={0} len={72}>V_G1</Flag>
      <Flag x={1022} y={313} dir={0} len={72}>V_G3</Flag>
      <Flag x={629} y={586} dir={0} len={72}>V_G2</Flag>
      <Flag x={1022} y={586} dir={0} len={72}>V_G4</Flag>
      <Flag x={416} y={481} dir={0} len={72}>V_G5</Flag>
      <Flag x={662} y={373} dir={0} len={72}>V_S1</Flag>
      <Flag x={1055} y={373} dir={0} len={72}>V_S3</Flag>
      <Flag x={662} y={616} dir={0} len={72}>V_S2</Flag>
      <Flag x={1055} y={616} dir={0} len={72}>V_S4</Flag>
      <Flag x={449} y={541} dir={0} len={72}>V_S5</Flag>
      <Flag x={862} y={418} dir={0} len={66}>HB+</Flag>
      <Flag x={889} y={418} dir={180} len={58} w={40}>HB-</Flag>
      {[[205, 208], [463, 208], [677, 208], [463, 403], [677, 373], [1070, 373], [677, 418], [1070, 418], [463, 541], [677, 616], [1070, 616], [115, 631], [205, 631], [463, 631], [677, 631]].map(([x, y]) => (
        <Dot key={`${x}-${y}`} x={x} y={y} />
      ))}
      <T a={120} b={195} y={182}>D_Rect</T>
      <T a={150} b={165} y={237}>D</T>
      <V x={191} a={321} b={247}>V_Rect</V>
      <T a={355} b={430} y={293}>R_chop</T>
      <T a={378} b={415} y={320}>100</T>
      <T a={136} b={192} y={389}>V_DC</T>
      <T a={136} b={186} y={464}>200V</T>
      <T a={214} b={287} y={413}>C_Rect</T>
      <T a={214} b={250} y={458}>10µ</T>
      <T a={-186} b={44} y={571}>.tran 0 200m 0 0.005m</T>
    </Region>
    <Machine x={1360} y={1030} n="" back="Back_emf_gen" head={[356, 800, 78]} sub={[447, 735, 116]} subText="to which driver is connected"
      upper={[401, '+']} lower={[688, '-']} rail={['HB+', 'HB-']} railLen={[69, 55]} gnd="R_GND1" />
    <Region x={1360} y={1030}>
      {PARAMS.map(([t, b, y]) => <T key={t} a={485} b={b} y={y}>{t}</T>)}
    </Region>
    <Machine x={1748} y={1030} n="1" back="Back_emf_mot" head={[397, 842, 70]} sub={[507, 801, 107]} subText="which is coupled to the other"
      upper={[418, '-']} lower={[568, '+']} rail={['Va_Motor+', 'Va_Motor-']} railLen={[137, 124]} gnd="R_GND2" />
    <Region x={1750} y={1030}>
      <Wire d="M1168 401V447M1168 520V553" />
      <Flag x={1168} y={266} dir={270} len={135}>Va_Motor+</Flag>
      <Flag x={1168} y={680} dir={90} len={127}>Va_Motor-</Flag>
      <Source x={1167} y={483} />
      <T a={1192} b={1290} y={449}>Va_Motor</T>
      <T a={1192} b={1503} y={524}>PULSE(0 320 10m 10m 0 1000)</T>
    </Region>
    <Region x={1480} y={780}>
      <Head a={354} b={628} y={58}>Recycle Bin</Head>
      <Source x={103} y={235} open />
      <T a={124} b={240} y={200}>Back_emf1</T>
      <T a={124} b={272} y={275}>V=200*K_emf</T>
      <Source x={646} y={265} open />
      <T a={486} b={624} y={221}>V_DC_CONST</T>
      <T a={322} b={867} y={341}>PWL(0 0 10m 320 40m 320 40.000001m 320 50m 320)</T>
      <Source x={1154} y={213} flat open />
      <T a={861} b={1239} y={167}>PULSE(0 10 0 1p 1p 0.02866m 0.05m)</T>
      <T a={1180} b={1207} y={248}>V1</T>
      <Source x={1154} y={348} flat open />
      <T a={864} b={1371} y={299}>PULSE(0 10 0.02866m 1p 1p 0.02134m 0.05m 400)</T>
      <T a={1180} b={1207} y={386}>V2</T>
    </Region>
    <g fill="#808080" fillOpacity="0.32" fontFamily={UI}>
      <text x="2163" y="1291" fontSize="26.500" textLength="195" lengthAdjust="spacingAndGlyphs">Activate Windows</text>
      <text x="2163" y="1319" fontSize="19" textLength="283" lengthAdjust="spacingAndGlyphs">Go to Settings to activate Windows.</text>
    </g>
  </svg>
);

/* ---------- taskbar drawings ---------- */
const SearchArt = () => (
  <svg width="92" height="47" viewBox="0 0 92 47">
    <path d="M30 40l10-14 6 4 6-10 6 6 24-8 10 14v12z" fill="#8fa0d2" />
    <path d="M38 38l6-10 5-7 5 8 8-17 3-4 5 10 5 6 5-3 8 17z" fill="#4f84b8" />
    <path d="M58 38l6-18 2-8 6 12 6 14z" fill="#2f6c9c" />
    <path d="M80 36l6-14 6-4v20z" fill="#6b6fb4" />
    <path d="M36 38q24-8 56-4v13H30z" fill="#c2b93c" />
    <path d="M54 40q20-4 38 1v6H48z" fill="#6f9f3f" />
    <ellipse cx="8" cy="16" rx="6" ry="4" fill="#7da04a" /><ellipse cx="36" cy="22" rx="7" ry="4" fill="#7da04a" /><ellipse cx="20" cy="42" rx="8" ry="6" fill="#6f9a50" />
    <path d="M24 40Q10 34 6 22T4 4M7 18q-5-3-6-10M15 33q-4-10 0-16t-2-13M14 18q5-4 4-14M22 36q2-10 8-14t5-19M30 22q8 0 10-8" fill="none" stroke="#93642a" strokeWidth="3" />
    <path d="M17 47q8-10 0-19l8 5q8 4 18 0 2 5-6 6-6 2-5 8z" fill="#7a4d1a" />
  </svg>
);
const Chrome = () => (
  <svg width="31" height="31" viewBox="0 0 30 30">
    <circle cx="15" cy="15" r="15" fill="#fbc116" />
    <path d="M15 15L2 7.500A15 15 0 0 1 28 7.500z" fill="#e33b2e" />
    <path d="M15 15L2 7.500A15 15 0 0 0 14 30l7-12z" fill="#229b48" />
    <path d="M15 8H28.300" stroke="#e33b2e" strokeWidth="1" />
    <circle cx="15" cy="15" r="7.200" fill="#fff" /><circle cx="15" cy="15" r="5.600" fill="#4285f4" />
  </svg>
);
const Edge = () => (
  <svg width="31" height="31" viewBox="0 0 30 30">
    <defs><linearGradient id="edgeTop" x1="0" x2="1"><stop offset="0" stopColor="#1e9de0" /><stop offset="1" stopColor="#5fe06a" /></linearGradient></defs>
    <circle cx="15" cy="15" r="15" fill="#1476cf" />
    <path d="M0 14C2 4 9 0 16 0c9 0 14 6 14 12 0 5-4 7-8 7-3 0-5-1-4-3 3-7-12-12-18-2z" fill="url(#edgeTop)" />
    <path d="M18 16c-1 3 4 5 9 4 2 0 4-1 3 0-4 5-13 3-16-1-2-3 1-6 1-6 2 0 4 1 3 3z" fill="#203842" />
    <path d="M10 16c-1 9 7 12 15 10-8 6-22 4-21-8 1-5 6-8 10-7-2 1-4 3-4 5z" fill="#0c59a4" />
  </svg>
);
const Folder = () => (
  <svg width="28" height="25" viewBox="0 0 28 25">
    <path d="M0 1q0-1 1-1h9l3 3h14q1 0 1 1v18H0z" fill="#e8a91c" /><path d="M0 5h28v17q0 1-1 1H1q-1 0-1-1z" fill="#ffd766" />
    <path d="M5 25V14q0-2 2-2h14q2 0 2 2v11h-5v-6h-8v6z" fill="#3a93d8" />
  </svg>
);
const GitIcon = () => (
  <svg width="31" height="31" viewBox="0 0 32 32">
    <path d="M16 0l8 8-8 8-8-8z" fill="#f07070" /><path d="M24 8l8 8-8 8-8-8z" fill="#78c257" /><path d="M8 8l8 8-8 8-8-8z" fill="#72a9e8" /><path d="M16 16l8 8-8 8-8-8z" fill="#ffe070" />
    <path d="M11 6l5 6v12M16 12l6 5" stroke="#222" strokeWidth="2" fill="none" />
    <circle cx="16" cy="12" r="2.600" fill="#222" /><circle cx="22" cy="17" r="2.600" fill="#222" /><circle cx="16" cy="23" r="2.600" fill="#222" />
  </svg>
);

const MENU: [string, number][] = [['File', 39], ['View', 48], ['Plot Settings', 99], ['Simulation', 87], ['Tools', 51], ['Window', 71], ['Help', 50]];

export default function App() {
  return (
    <Screen>
      <Global />
      <TitleBar>
        <LtLogo size={20} />
        <AppTitle>LTspice XVII - Fourth_Quad.raw</AppTitle>
        <Spring />
        <CaptionButton w={58}><svg width="12" height="12"><path d="M0 5.500h12" stroke="#000" /></svg></CaptionButton>
        <CaptionButton w={58}><svg width="12" height="12" fill="none" stroke="#000" shapeRendering="crispEdges"><path d="M.5 2.500h9v9h-9zM2.500 2.500v-2h9v9h-2" /></svg></CaptionButton>
        <CaptionButton w={61}><svg width="12" height="12"><path d="M0 0l12 12M12 0L0 12" stroke="#000" strokeWidth="1.200" /></svg></CaptionButton>
      </TitleBar>
      <MenuBar>
        {MENU.map(([m, w]) => (
          <MenuItem key={m} w={w}><u>{m[0]}</u>{m.slice(1)}</MenuItem>
        ))}
      </MenuBar>
      <ToolRow>
        <ToolStrip>
          <Grip />
          {TOOLS.map((t, i) =>
            t === '|' ? <Separator key={i} /> : (
              <ToolButton key={i}><svg width="24" height="24" viewBox="0 0 24 24">{ICONS[t]}</svg></ToolButton>
            ),
          )}
        </ToolStrip>
      </ToolRow>
      <TabStrip>
        <Tab><AscIcon />Fourth_Quad.asc</Tab>
        <Tab active><RawIcon />Fourth_Quad.raw</Tab>
      </TabStrip>
      <Desk>
        <DocWindow active>
          <DocTitle active><RawIcon doc /><DocName>Fourth_Quad.raw</DocName><Spring /><DocControls active /></DocTitle>
          <Client bg="#ffffff"><Plot /></Client>
        </DocWindow>
        <DocWindow>
          <DocTitle><AscIcon /><DocName>Fourth_Quad.asc</DocName><Spring /><DocControls /></DocTitle>
          <Client bg="#c0c0c0"><Schematic /></Client>
        </DocWindow>
      </Desk>
      <StatusBar><span>x = 5.97ms</span><span>y = 313.92V, 4.475A</span></StatusBar>
      <TaskBar>
        <StartButton><svg width="20" height="20" viewBox="0 0 20 20"><path d="M0 3l8.500-1.200v7.700H0zM9.500 1.600L20 0v9.500H9.500zM0 10.500h8.500v7.700L0 17zM9.500 10.500H20V20L9.500 18.400z" fill="#fff" /></svg></StartButton>
        <SearchBox>
          <svg width="22" height="22" viewBox="0 0 22 22"><circle cx="14" cy="8" r="7" fill="none" stroke="#222" strokeWidth="1.600" /><path d="M9 13l-8 8" stroke="#222" strokeWidth="1.800" /></svg>
          <SearchText>Type here to search</SearchText>
          <SearchArt />
        </SearchBox>
        <TaskButton w={60}><TaskIcon><svg width="20" height="20"><circle cx="10" cy="10" r="8.500" fill="none" stroke="#fff" strokeWidth="2.400" /></svg></TaskIcon></TaskButton>
        <TaskButton w={62}><TaskIcon><svg width="21" height="20" fill="none" stroke="#fff" strokeWidth="1.400"><path d="M1 0v3h12V0M1 20v-3h12v3M1 6h12v8H1zM18 0v4M18 9v11M16 6h4" /></svg></TaskIcon></TaskButton>
        <TaskButton w={63} bar={51}><TaskIcon><Chrome /></TaskIcon></TaskButton>
        <TaskButton w={62} bar={51}><TaskIcon><Edge /></TaskIcon></TaskButton>
        <TaskButton w={62} bar={51}><TaskIcon><Folder /></TaskIcon></TaskButton>
        <TaskButton w={62} bar={51}><TaskIcon><GitIcon /></TaskIcon></TaskButton>
        <TaskButton w={61} bar={61} on><TaskIcon><LtLogo size={31} dark /></TaskIcon></TaskButton>
        <Spring />
        <Weather>
          <svg width="32" height="30" viewBox="0 0 32 30"><path d="M12 1q6 6 2 12T1 17q6-2 8-7t3-9z" fill="#f2a52c" /><path d="M7 29a7 7 0 0 1 0-13 9 9 0 0 1 17-1 7 7 0 0 1 1 14z" fill="#a9c8f4" /><path d="M7 29a7 6 0 0 1 2-9q8-5 14 2t9 0a7 7 0 0 1-7 7z" fill="#d3e4fc" /></svg>
          {'37°F  Mostly cloudy'}
        </Weather>
        <Tray>
          <svg width="16" height="9"><path d="M1 8l7-7 7 7" fill="none" stroke="#fff" strokeWidth="1.500" /></svg>
          <svg width="15" height="19" fill="none" stroke="#fff" strokeWidth="1.300"><rect x="1" y="5" width="9" height="9" rx="2" /><path d="M10 8l4-2v7l-4-2M2 2q4-2 9 0M2 17q4 2 9 0" /></svg>
          <svg width="21" height="18" fill="none" stroke="#fff" strokeWidth="1.300"><path d="M5 3h15v10H4V8M12 13v3M8 16.500h8M1 2h4v4H1zM3 6v3" /></svg>
          <svg width="22" height="18" fill="none" stroke="#fff" strokeWidth="1.300"><path d="M1 6h3l4-4v13l-4-4H1zM11 6q2 2.500 0 5M14 4q4 4.500 0 9M17 1.500q6 7 0 14" /></svg>
        </Tray>
        <TwoLine w={38}>ENG<br />TRQ</TwoLine>
        <TwoLine w={84} center>2:55 AM<br />12/8/2022</TwoLine>
        <Notice>
          <svg width="32" height="32" viewBox="0 0 32 32"><path d="M1 2h20v15H9l-4 4v-4H1z" fill="#fff" /><path d="M4 6h14M4 9.500h14M4 13h14" stroke="#1b2944" strokeWidth="1.500" /><circle cx="20.500" cy="21" r="9.500" fill="#2b3038" stroke="#8a929c" /><text x="20.500" y="26.500" fontSize="15" textAnchor="middle" fill="#fff" fontFamily={UI}>1</text></svg>
        </Notice>
        <PeekEdge />
      </TaskBar>
    </Screen>
  );
}
